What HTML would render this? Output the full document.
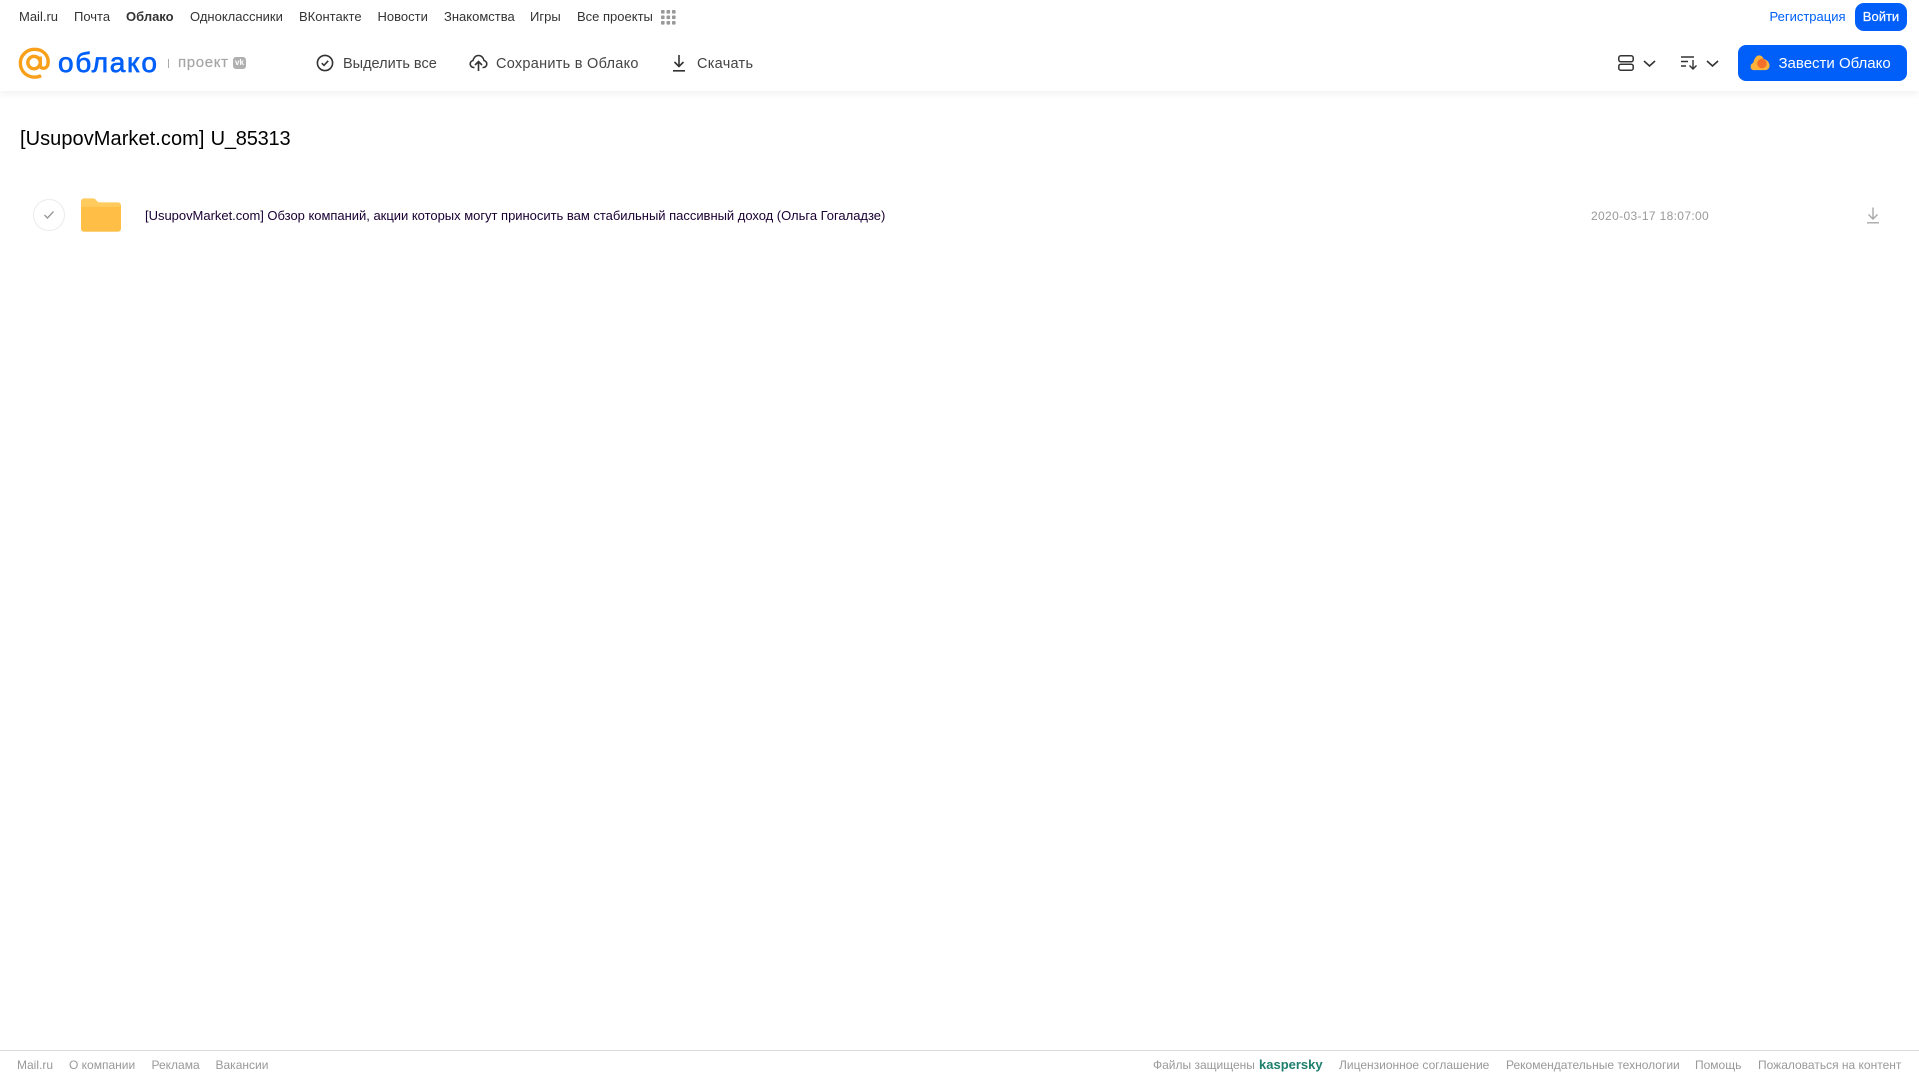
<!DOCTYPE html>
<html lang="ru"><head><meta charset="utf-8"><title>Облако</title>
<style>
html,body{margin:0;padding:0;background:#fff}
body{position:relative;width:1919px;height:1079px;overflow:hidden;font-family:"Liberation Sans",Arial,sans-serif;color:#333}
.t{position:absolute;white-space:nowrap;display:block;text-decoration:none}
svg{position:absolute;display:block}
.n{top:8px;line-height:18px;font-size:13px;color:#333}
.a{top:54px;line-height:20px;font-size:14.5px;color:#444}
.f{top:1057px;line-height:16px;font-size:12px;color:#999}
#hdr{position:absolute;left:0;top:0;width:1919px;height:91px;background:#fff;box-shadow:0 2px 8px rgba(0,0,0,.07)}
</style></head><body>
<div id="hdr"></div>

<a class="t n" style="left:19px">Mail.ru</a>
<a class="t n" style="left:74px">Почта</a>
<a class="t n" style="left:126px;font-weight:700">Облако</a>
<a class="t n" style="left:190px">Одноклассники</a>
<a class="t n" style="left:299px">ВКонтакте</a>
<a class="t n" style="left:377.500px">Новости</a>
<a class="t n" style="left:444px">Знакомства</a>
<a class="t n" style="left:530px">Игры</a>
<a class="t n" style="left:577px">Все проекты</a>
<svg style="left:661px;top:10px" width="15" height="15" viewBox="0 0 15 15" fill="#999"><rect x="0" y="0" width="3.6" height="3.6" rx=".8"/><rect x="5.5" y="0" width="3.6" height="3.6" rx=".8"/><rect x="11" y="0" width="3.6" height="3.6" rx=".8"/><rect x="0" y="5.5" width="3.6" height="3.6" rx=".8"/><rect x="5.5" y="5.5" width="3.6" height="3.6" rx=".8"/><rect x="11" y="5.5" width="3.6" height="3.6" rx=".8"/><rect x="0" y="11" width="3.6" height="3.6" rx=".8"/><rect x="5.5" y="11" width="3.6" height="3.6" rx=".8"/><rect x="11" y="11" width="3.6" height="3.6" rx=".8"/></svg>

<a class="t n" style="left:1769.500px;color:#005ff9">Регистрация</a>
<div class="t" style="left:1855px;top:3px;width:52px;height:28px;border-radius:9px;background:#005ff9;color:#fff;font-size:13px;line-height:27px;text-align:center;-webkit-text-stroke:.2px #fff">Войти</div>

<!-- logo -->
<svg style="left:18px;top:46.500px" width="33" height="33" viewBox="0 0 35 34" fill="none" stroke="#f9a01b" stroke-width="3.6"><circle cx="17" cy="16" r="6.6"/><path d="M23.6 9.600v9.200c0 4.600 7.200 4.600 8.200-1.200C33.300 8.500 26.500 2 17.500 2 9 2 2.500 8.500 2.500 16.500c0 8.500 6.500 15 15 15 3 0 5.200-.6 7-1.600"/></svg>
<span class="t" style="left:58px;top:44.500px;line-height:36px;font-size:28px;color:#005ff9;letter-spacing:1.700px;-webkit-text-stroke:.7px #005ff9">облако</span>
<div class="t" style="left:168px;top:59px;width:1px;height:9px;background:#aaa"></div>
<span class="t" style="left:178px;top:53px;line-height:20px;font-size:15px;color:#a6a6a6;letter-spacing:.65px;-webkit-text-stroke:.2px #a6a6a6">проект</span>
<div class="t" style="left:233px;top:57px;width:13px;height:12px;border-radius:3px;background:#b0b0b0;color:#fff;font-size:8px;font-weight:700;line-height:12px;text-align:center">vk</div>

<!-- actions -->
<svg style="left:316px;top:54px" width="18" height="18" viewBox="0 0 18 18" fill="none" stroke="#333" stroke-width="1.6"><circle cx="9" cy="9" r="7.6"/><path d="M5.800 9.200 8 11.400l4.200-4.600"/></svg>
<span class="t a" style="left:343px">Выделить все</span>
<svg style="left:469px;top:54px" width="19" height="18" viewBox="0 0 19 18" fill="none" stroke="#333" stroke-width="1.6"><path d="M5.500 13.500H4.800C2.800 13.500 1.200 12 1.200 10c0-1.700 1.200-3.100 2.800-3.500C4.500 3.600 6.800 1.500 9.500 1.500s5 2.100 5.500 5c1.600.4 2.800 1.800 2.800 3.500 0 2-1.600 3.500-3.600 3.500h-.7"/><path d="M9.500 17V8M6 11l3.500-3.500L13 11"/></svg>
<span class="t a" style="left:496px;letter-spacing:.27px">Сохранить в Облако</span>
<svg style="left:672px;top:54px" width="14" height="18" viewBox="0 0 14 18" fill="none" stroke="#333" stroke-width="1.6"><path d="M7 1v11.500M2.500 8 7 12.500 11.500 8M1 16.800h12"/></svg>
<span class="t a" style="left:697px;letter-spacing:.27px">Скачать</span>

<svg style="left:1618px;top:55px" width="16" height="16" viewBox="0 0 16 16" fill="none" stroke="#333" stroke-width="1.5"><rect x=".8" y=".8" width="14.400" height="6" rx="2"/><rect x=".8" y="9.200" width="14.400" height="6" rx="2"/></svg>
<svg style="left:1643px;top:60px" width="13" height="7" viewBox="0 0 13 7" fill="none" stroke="#333" stroke-width="1.6"><path d="M1 1l5.500 5L12 1"/></svg>
<svg style="left:1681px;top:56px" width="17" height="14" viewBox="0 0 17 14" fill="none" stroke="#333" stroke-width="1.4"><path d="M0 1h13M0 5.500h7M0 10h5M12 4v9M8.500 9.500 12 13l3.500-3.500"/></svg>
<svg style="left:1706px;top:60px" width="13" height="7" viewBox="0 0 13 7" fill="none" stroke="#333" stroke-width="1.6"><path d="M1 1l5.500 5L12 1"/></svg>

<div class="t" style="left:1738px;top:45px;width:169px;height:36px;border-radius:8px;background:#005ff9"></div>
<svg style="left:1750px;top:54px" width="20" height="17" viewBox="0 0 21 17"><path d="M4 16.500C1.800 16.500.6 14.800.6 12.800c0-2 1.100-3.400 2.800-3.900C4.200 5 6.500 1 9.500 1c2.300 0 4 1.600 4.800 3.800 3.400.4 6.200 3.700 6.200 7 0 2.900-1.900 4.700-4.500 4.700z" fill="#fdb33a"/><circle cx="12.500" cy="9.500" r="5" fill="#f4702a"/></svg>
<span class="t" style="left:1778.500px;top:54px;line-height:20px;font-size:15px;color:#fff">Завести Облако</span>

<!-- title -->
<h1 class="t" style="left:20px;top:124.500px;margin:0;line-height:28px;font-size:20px;font-weight:400;color:#000"><span style="letter-spacing:.06px">[UsupovMarket.com]</span> <span style="letter-spacing:-.2px;margin-left:.6px">U_85313</span></h1>

<!-- row -->
<div class="t" style="left:33px;top:199px;width:30px;height:30px;border:1px solid #ebebeb;border-radius:50%"></div>
<svg style="left:43px;top:210px" width="12" height="10" viewBox="0 0 12 10" fill="none" stroke="#969696" stroke-width="1.300"><path d="M1.500 5 4.500 8 10.500 1.500"/></svg>
<svg style="left:81px;top:198px" width="40" height="34" viewBox="0 0 41 34"><path d="M0 3a3 3 0 0 1 3-3h9c2 0 3 1 4 2.400C17 3.400 17.500 4 19 4h19a3 3 0 0 1 3 3v24a3 3 0 0 1-3 3H3a3 3 0 0 1-3-3z" fill="#ffca5e"/><path d="M0 8.500h41V31a3 3 0 0 1-3 3H3a3 3 0 0 1-3-3z" fill="#ffbf47"/></svg>
<span class="t" style="left:145px;top:207px;line-height:18px;font-size:13px;color:#1a0033;letter-spacing:-.02px">[UsupovMarket.com] Обзор компаний, акции которых могут приносить вам стабильный пассивный доход (Ольга Гогаладзе)</span>
<span class="t" style="left:1591px;top:207px;line-height:18px;font-size:12px;color:#999;letter-spacing:.35px">2020-03-17 18:07:00</span>
<svg style="left:1866px;top:207px" width="14" height="17" viewBox="0 0 14 17" fill="none" stroke="#a8a8a8" stroke-width="1.400"><path d="M7 .5v11M2.500 7.500 7 12l4.500-4.500M1 15.800h12"/></svg>

<!-- footer -->
<div class="t" style="left:0;top:1050px;width:1919px;height:1px;background:#dcdcdc"></div>
<a class="t f" style="left:17px">Mail.ru</a>
<a class="t f" style="left:69px">О компании</a>
<a class="t f" style="left:151.500px">Реклама</a>
<a class="t f" style="left:215.500px">Вакансии</a>
<span class="t f" style="left:1153px">Файлы защищены</span>
<span class="t" style="left:1259px;top:1056px;line-height:18px;font-size:13px;font-weight:700;color:#1d7f6d">kaspersky</span>
<a class="t f" style="left:1339px">Лицензионное соглашение</a>
<a class="t f" style="left:1506px">Рекомендательные технологии</a>
<a class="t f" style="left:1695px">Помощь</a>
<a class="t f" style="left:1758px">Пожаловаться на контент</a>
</body></html>
